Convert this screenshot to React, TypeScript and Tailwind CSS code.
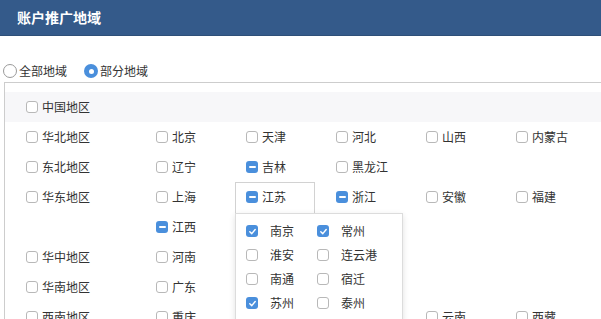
import React from 'react';

type CheckState = 'off' | 'on' | 'mixed';

const Check: React.FC<{ state?: CheckState }> = ({ state = 'off' }) => {
  if (state === 'off') {
    return <span className="inline-block w-[12px] h-[12px] shrink-0 rounded-[3px] border border-[#b8b8b8] bg-white" />;
  }
  return (
    <span className="inline-flex w-[12px] h-[12px] shrink-0 items-center justify-center rounded-[3px] bg-[#4a8fdc]">
      {state === 'on' ? (
        <svg width="9" height="9" viewBox="0 0 10 10" fill="none">
          <path d="M2 5.2 4.2 7.4 8 2.8" stroke="white" strokeWidth="1.6" strokeLinecap="round" strokeLinejoin="round" />
        </svg>
      ) : (
        <span className="block w-[7px] h-[2px] rounded-full bg-white" />
      )}
    </span>
  );
};

const Item: React.FC<{ label: string; state?: CheckState }> = ({ label, state }) => (
  <div className="w-[90px] h-[30px] flex items-center gap-[4px] shrink-0">
    <Check state={state} />
    <span>{label}</span>
  </div>
);

const jiangsuCities: [string, CheckState][] = [
  ['南京', 'on'],
  ['常州', 'on'],
  ['淮安', 'off'],
  ['连云港', 'off'],
  ['南通', 'off'],
  ['宿迁', 'off'],
  ['苏州', 'on'],
  ['泰州', 'off'],
];

// 江苏 is the open one: its own framed cell plus the city popup hanging under it
const JiangsuItem: React.FC = () => (
  <div className="relative w-[90px] h-[30px] shrink-0">
    <div className="absolute -left-[11px] top-0 w-[80px] h-[32px] border border-[#d2d2d2] bg-white" />
    <div className="absolute inset-0 flex items-center gap-[4px] z-10">
      <Check state="mixed" />
      <span>江苏</span>
    </div>
    <div className="absolute -left-[11px] top-[31px] w-[168px] h-[110px] border border-[#dcdcdc] bg-white shadow-[0_2px_6px_rgba(0,0,0,0.12)] z-20 pt-[5px] pl-[10px] grid grid-cols-[71px_1fr] auto-rows-[24px]">
      {jiangsuCities.map(([name, st]) => (
        <div key={name} className="flex items-center gap-[12px]">
          <Check state={st} />
          <span>{name}</span>
        </div>
      ))}
    </div>
  </div>
);

const regions: { name: string; items: [string, CheckState][] }[] = [
  { name: '华北地区', items: [['北京', 'off'], ['天津', 'off'], ['河北', 'off'], ['山西', 'off'], ['内蒙古', 'off']] },
  { name: '东北地区', items: [['辽宁', 'off'], ['吉林', 'mixed'], ['黑龙江', 'off']] },
  { name: '华东地区', items: [['上海', 'off'], ['江苏', 'mixed'], ['浙江', 'mixed'], ['安徽', 'off'], ['福建', 'off'], ['江西', 'mixed'], ['山东', 'off']] },
  { name: '华中地区', items: [['河南', 'off'], ['湖北', 'off'], ['湖南', 'off']] },
  { name: '华南地区', items: [['广东', 'off'], ['广西', 'off'], ['海南', 'off']] },
  { name: '西南地区', items: [['重庆', 'off'], ['四川', 'off'], ['贵州', 'off'], ['云南', 'off'], ['西藏', 'off']] },
  { name: '西北地区', items: [['陕西', 'off'], ['甘肃', 'off'], ['青海', 'off'], ['宁夏', 'off'], ['新疆', 'off']] },
];

const Radio: React.FC<{ checked?: boolean; label: string }> = ({ checked, label }) => (
  <label className="flex items-center gap-[2px]">
    {checked ? (
      <span className="w-[14px] h-[14px] rounded-full bg-[#4a8fdc] flex items-center justify-center">
        <span className="w-[5px] h-[5px] rounded-full bg-white" />
      </span>
    ) : (
      <span className="w-[14px] h-[14px] rounded-full border border-[#9a9a9a] bg-white" />
    )}
    <span>{label}</span>
  </label>
);

export default function App() {
  return (
    <div
      className="h-screen overflow-hidden bg-white text-[12px] text-[#333]"
      style={{ fontFamily: '"Noto Sans CJK SC", "Noto Sans", sans-serif' }}
    >
      {/* Header */}
      <div className="h-9 bg-[#345a8a] border-b border-[#2e4f78] flex items-center pl-[17px]">
        <h1 className="text-white text-[14px] font-bold">账户推广地域</h1>
      </div>

      {/* Scope radios */}
      <div className="mt-[25px] h-[20px] pl-[3px] flex items-center gap-[17px]">
        <Radio label="全部地域" />
        <Radio checked label="部分地域" />
      </div>

      {/* Region picker */}
      <div className="mt-px ml-1 border-l border-t border-[#cdcdcd] pt-[9px] w-[620px]">
        <div className="h-[30px] bg-[#f7f7f9] pl-[21px] flex items-center gap-[4px]">
          <Check />
          <span>中国地区</span>
        </div>

        {regions.map((r) => (
          <div key={r.name} className="flex items-start pl-[21px]">
            <div className="w-[130px] h-[30px] flex items-center gap-[4px] shrink-0">
              <Check />
              <span>{r.name}</span>
            </div>
            <div className="w-[450px] flex flex-wrap">
              {r.items.map(([name, st]) =>
                name === '江苏' ? <JiangsuItem key={name} /> : <Item key={name} label={name} state={st} />
              )}
            </div>
          </div>
        ))}
      </div>
    </div>
  );
}
